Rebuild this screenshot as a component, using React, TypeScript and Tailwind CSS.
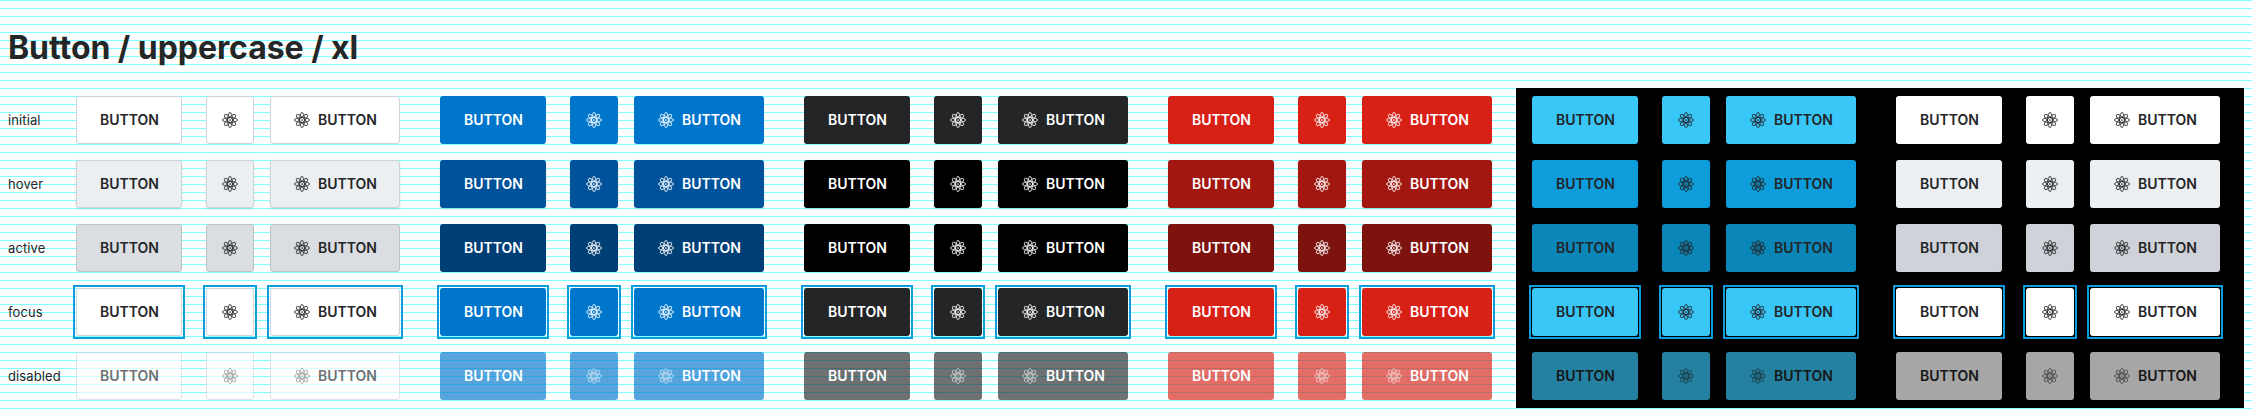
type Tone = {
  text: string;
  states: [string, string, string, string, string];
};

const LABELS = ["initial", "hover", "active", "focus", "disabled"];

const LIGHT: Tone[] = [
  {
    text: "text-[#252627]",
    states: [
      "bg-white border border-[#cfd3d9]",
      "bg-[#ebeff2] border border-[#cfd3d9]",
      "bg-[#dadde2] border border-[#bfc1c5]",
      "bg-white border border-[#cfd3d9]",
      "bg-white border border-[#cfd3d9]",
    ],
  },
  {
    text: "text-white",
    states: ["bg-[#0075cc]", "bg-[#00529b]", "bg-[#003f75]", "bg-[#0075cc]", "bg-[#0075cc]"],
  },
  {
    text: "text-white",
    states: ["bg-[#232527]", "bg-black", "bg-black", "bg-[#232527]", "bg-[#232527]"],
  },
  {
    text: "text-white",
    states: ["bg-[#d72117]", "bg-[#a21811]", "bg-[#7e130d]", "bg-[#d72117]", "bg-[#d72117]"],
  },
];

const DARK: Tone[] = [
  {
    text: "text-[#232527]",
    states: ["bg-[#38c7f7]", "bg-[#0d9ddb]", "bg-[#0b86b8]", "bg-[#38c7f7]", "bg-[#38c7f7]"],
  },
  {
    text: "text-[#232527]",
    states: ["bg-white", "bg-[#ebeff2]", "bg-[#cfd2d8]", "bg-white", "bg-white"],
  },
];

// Extra styling for each interaction state, in the order of LABELS.
const EFFECTS = ["", "shadow-[0_1px_3px_rgba(0,0,0,0.12)]", "", "", "opacity-65"];

function Atom({ faded }: { faded: boolean }) {
  return (
    <svg
      viewBox="0 0 16 16"
      className={`size-4 shrink-0 ${faded ? "opacity-65" : ""}`}
      fill="none"
      stroke="currentColor"
      strokeWidth="0.85"
    >
      {[0, 45, 90, 135].map((a) => (
        <ellipse key={a} cx="8" cy="8" rx="7.6" ry="2.4" transform={`rotate(${a} 8 8)`} />
      ))}
      <circle cx="8" cy="8" r="0.85" fill="currentColor" stroke="none" />
    </svg>
  );
}

type ButtonProps = { look: string; state: number; icon?: boolean; label?: boolean };

function Button({ look, state, icon, label }: ButtonProps) {
  const width = icon && label ? "w-[130px]" : icon ? "w-12" : "w-[106px]";
  return (
    <div className={state === 3 ? "outline-2 outline-offset-1 outline-[#0d9ddb]" : ""}>
      <button
        className={`flex h-12 items-center justify-center gap-2 rounded-[3px] text-sm font-semibold ${width} ${look} ${EFFECTS[state]}`}
      >
        {icon && <Atom faded={state === 4} />}
        {label && <span className="w-[58px] shrink-0 whitespace-nowrap text-left">BUTTON</span>}
      </button>
    </div>
  );
}

function Group({ tone, state }: { tone: Tone; state: number }) {
  const look = `${tone.states[state]} ${tone.text}`;
  return (
    <div className="flex h-16 w-[364px] items-center pl-4">
      <Button look={look} state={state} label />
      <div className="ml-6 mr-4">
        <Button look={look} state={state} icon />
      </div>
      <Button look={look} state={state} icon label />
    </div>
  );
}

function Panel({ tones }: { tones: Tone[] }) {
  return (
    <>
      {LABELS.map((l, i) => (
        <div key={l} className="flex">
          {tones.map((t, k) => (
            <Group key={k} tone={t} state={i} />
          ))}
        </div>
      ))}
    </>
  );
}

export default function App() {
  return (
    <div className="h-[416px] w-[2252px] overflow-hidden bg-white bg-[repeating-linear-gradient(to_bottom,#80ffff_0px,#80ffff_1px,transparent_1px,transparent_8px)] px-2 font-['Inter',sans-serif] text-[#252627]">
      <h1 className="flex h-[88px] items-center pt-2 text-[32px] font-bold leading-10 tracking-[-0.05px]">
        Button / uppercase / xl
      </h1>
      <div className="flex">
        <div className="w-[52px] text-[13px] leading-5 tracking-[0.1px]">
          {LABELS.map((l) => (
            <div key={l} className="flex h-16 items-center whitespace-nowrap">
              {l}
            </div>
          ))}
        </div>
        <div>
          <Panel tones={LIGHT} />
        </div>
        <div className="bg-black">
          <Panel tones={DARK} />
        </div>
      </div>
    </div>
  );
}
